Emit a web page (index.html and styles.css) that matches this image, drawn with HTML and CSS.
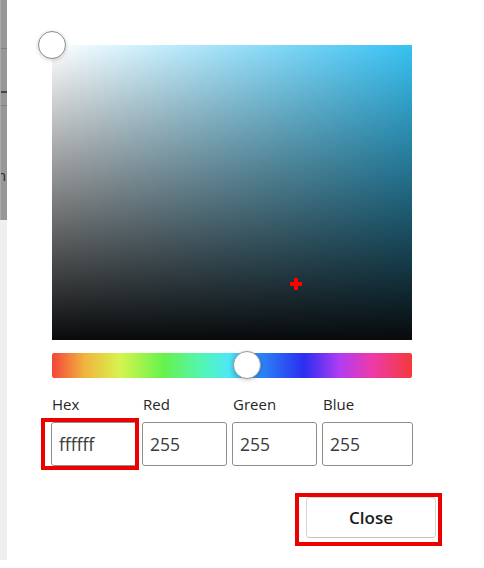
FILE: index.html
```html
<!DOCTYPE html>
<html lang="en">
<head>
<meta charset="utf-8">
<title>Color picker</title>
<link rel="stylesheet" href="styles.css">
</head>
<body>
<div class="page">
  <div class="strip">
    <div class="strip-dark">
      <div class="tick tick-a"></div>
      <div class="tick tick-b"></div>
      <div class="tick tick-c"></div>
      <div class="strip-letter">n</div>
    </div>
    <div class="strip-light"></div>
  </div>
  <div class="dialog">
    <div class="picker">
      <div class="sv-area">
        <div class="sv-thumb"></div>
        <svg class="cross" width="12" height="12" viewBox="0 0 12 12"><path d="M4 0h4v4h4v4H8v4H4V8H0V4h4z" fill="#f00"/></svg>
      </div>
      <div class="hue-bar">
        <div class="hue-thumb" style="left:54.2%"></div>
      </div>
      <div class="fields">
        <div class="field">
          <label class="field-label">Hex</label>
          <div class="input-wrap">
            <div class="input">ffffff</div>
            <div class="mark mark-hex"></div>
          </div>
        </div>
        <div class="field">
          <label class="field-label">Red</label>
          <div class="input-wrap"><div class="input">255</div></div>
        </div>
        <div class="field">
          <label class="field-label">Green</label>
          <div class="input-wrap"><div class="input">255</div></div>
        </div>
        <div class="field">
          <label class="field-label">Blue</label>
          <div class="input-wrap"><div class="input">255</div></div>
        </div>
      </div>
    </div>
    <div class="footer">
      <div class="btn-wrap">
        <button class="btn">Close</button>
        <div class="mark mark-btn"></div>
      </div>
    </div>
  </div>
</div>
</body>
</html>
```
FILE: styles.css
```css
* { box-sizing: border-box; }
html, body { margin: 0; padding: 0; background: #fff; }
body {
  width: 484px;
  height: 568px;
  overflow: hidden;
  font-family: "Open Sans", "Noto Sans", sans-serif;
  color: #1b1b1b;
}
.page {
  display: flex;
  height: 568px;
}
.strip {
  width: 7px;
  flex: none;
  display: flex;
  flex-direction: column;
}
.strip-dark {
  height: 220px;
  background: #979797;
  border-left: 1px solid #a9a9a9;
  overflow: hidden;
  position: relative;
  padding-top: 48px;
}
.tick { height: 1px; background: #7f7f7f; }
.tick-a { margin-bottom: 42px; }
.tick-b { height: 2px; background: #454545; margin-bottom: 12px; }
.tick-c { margin-bottom: 62px; }
.strip-letter {
  font-size: 15px;
  line-height: 15px;
  color: #2a2a2a;
  margin-left: -4px;
}
.strip-light {
  height: 340px;
  background: #efefef;
}
.dialog {
  flex: 1;
  display: flex;
  flex-direction: column;
  padding-top: 45px;
}
.picker {
  width: 362px;
  margin-left: 44px;
}
.sv-area {
  position: relative;
  margin-left: 1px;
  width: 360px;
  height: 295px;
  background:
    linear-gradient(to top, #080a0b, rgba(0,0,0,0)),
    linear-gradient(to right, #ffffff, #37c1f3);
}
.sv-thumb {
  position: absolute;
  left: -14px;
  top: -14px;
  width: 28px;
  height: 28px;
  border-radius: 50%;
  background: #fff;
  border: 1px solid #8c8c8c;
  box-shadow: 0 1px 4px rgba(0,0,0,0.18);
}
.cross {
  position: absolute;
  left: 238px;
  top: 233px;
}
.hue-bar {
  position: relative;
  margin-left: 1px;
  margin-top: 13px;
  width: 360px;
  height: 25px;
  border-radius: 2px;
  background: linear-gradient(to right,
    #f4453a 0%, #f1b43e 9%, #d6f44e 19%, #66f24c 31%, #52f5b8 42%,
    #4ee8f4 49%, #2b8cf6 57%, #2b2ef0 70%, #b23cf2 80%, #ee3aa8 89%, #f23a3a 100%);
}
.hue-thumb {
  position: absolute;
  top: -2px;
  width: 28px;
  height: 28px;
  margin-left: -14px;
  border-radius: 50%;
  background: #fff;
  border: 1px solid #9a9a9a;
  box-shadow: 0 1px 4px rgba(0,0,0,0.2);
}
.fields {
  display: grid;
  grid-template-columns: 86px 85px 85px 91px;
  column-gap: 5px;
  margin-top: 16px;
}
.field {
  display: flex;
  flex-direction: column;
  gap: 8px;
}
.field-label {
  font-size: 15px;
  line-height: 20px;
  color: #262626;
  padding-left: 1px;
}
.input-wrap { position: relative; }
.input {
  height: 44px;
  border: 1px solid #8e8e8e;
  border-radius: 3px;
  padding-left: 7px;
  font-size: 17.5px;
  line-height: 42px;
  color: #3a3a3a;
  background: #fff;
}
.mark {
  position: absolute;
  border: 4px solid #ec0000;
  pointer-events: none;
}
.mark-hex {
  left: -10px;
  top: -4px;
  width: 98px;
  height: 52px;
}
.footer {
  display: flex;
  justify-content: flex-end;
  padding-right: 48px;
  margin-top: 31px;
}
.btn-wrap { position: relative; }
.btn {
  display: block;
  width: 130px;
  height: 41px;
  background: #fff;
  border: 1px solid #d6d6d6;
  border-bottom-color: #c4c4c4;
  border-radius: 4px;
  font-family: "Open Sans", "Noto Sans", sans-serif;
  font-size: 17px;
  font-weight: 600;
  color: #1b1b1b;
  padding: 0;
}
.mark-btn {
  left: -11px;
  top: -4px;
  width: 147px;
  height: 53px;
}
```
